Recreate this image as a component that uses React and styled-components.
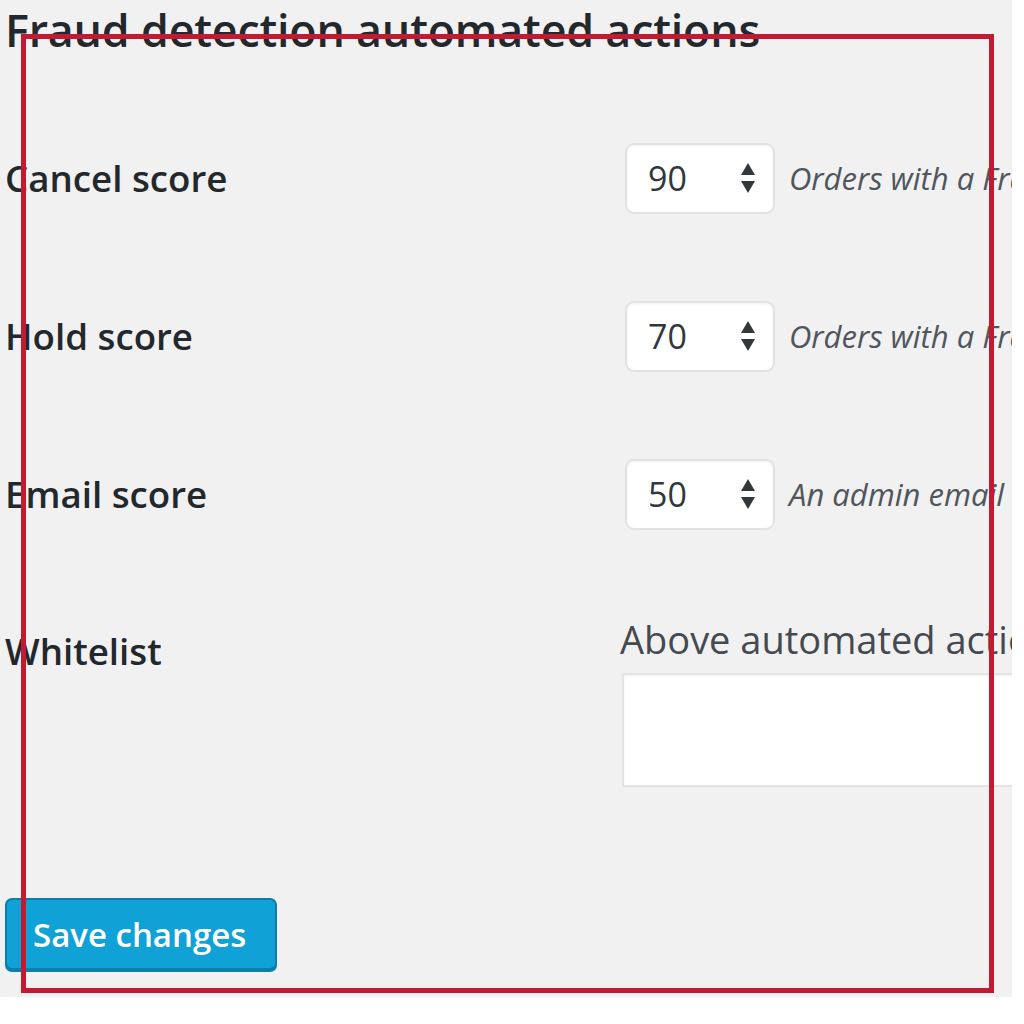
import React from "react";
import styled, { createGlobalStyle } from "styled-components";

const GlobalStyle = createGlobalStyle`
  html, body {
    margin: 0;
    padding: 0;
    background: #ffffff;
  }
  body {
    font-family: "Open Sans", "Noto Sans", sans-serif;
    color: #23282d;
  }
`;

const scores = [
  { id: "cancel", label: "Cancel score", value: 90, note: "Orders with a Fraud score of 90 or higher will be cancelled." },
  { id: "hold", label: "Hold score", value: 70, note: "Orders with a Fraud score of 70 or higher will be put on hold." },
  { id: "email", label: "Email score", value: 50, note: "An admin email will be sent for orders scoring 50 or higher." },
];

const Spinner = () => (
  <svg width="18" height="34" viewBox="0 0 18 34">
    <path d="M9 2 L16 14 L2 14 Z" fill="#32373c" />
    <path d="M9 32 L16 20 L2 20 Z" fill="#32373c" />
  </svg>
);

const App = () => {
  return (
    <>
      <GlobalStyle />
      <Panel>
        <Title>Fraud detection automated actions</Title>
        <Form>
          {scores.map(({ id, label, value, note }) => (
            <Row key={id}>
              <Label>{label}</Label>
              <Field>
                <NumberBox>
                  <NumberValue>{value}</NumberValue>
                  <Spinner />
                </NumberBox>
                <Note>{note}</Note>
              </Field>
            </Row>
          ))}
          <Row $top>
            <Label $pad>Whitelist</Label>
            <Stack>
              <Hint>Above automated actions will not be applied to these emails.</Hint>
              <TextArea />
            </Stack>
          </Row>
        </Form>
        <Footer>
          <SaveButton>Save changes</SaveButton>
        </Footer>
        <Frame />
      </Panel>
    </>
  );
};

export default App;

const Panel = styled.div`
  position: relative;
  width: 1012px;
  height: 997px;
  background: #f1f1f1;
  overflow: hidden;
  display: flex;
  flex-direction: column;
`;

const Title = styled.h2`
  margin: 0;
  padding: 3px 0 0 5px;
  height: 99px;
  box-sizing: border-box;
  font-size: 44.8px;
  font-weight: 600;
  line-height: 54px;
  letter-spacing: -0.2px;
  color: #23282d;
  white-space: nowrap;
`;

const Form = styled.div`
  display: flex;
  flex-direction: column;
`;

const Row = styled.div`
  display: grid;
  grid-template-columns: 620px 1fr;
  align-items: ${(p) => (p.$top ? "start" : "center")};
  height: ${(p) => (p.$top ? "auto" : "158px")};
  padding-top: ${(p) => (p.$top ? "44px" : "0")};
`;

const Label = styled.div`
  padding-left: 5px;
  padding-top: ${(p) => (p.$pad ? "12px" : "0")};
  font-size: 36.7px;
  font-weight: 600;
  line-height: 44px;
  color: #23282d;
  white-space: nowrap;
`;

const Field = styled.div`
  display: flex;
  align-items: center;
  gap: 14px;
  padding-left: 5px;
  white-space: nowrap;
`;

const NumberBox = styled.div`
  flex: none;
  width: 150px;
  height: 71px;
  box-sizing: border-box;
  display: flex;
  align-items: center;
  justify-content: space-between;
  padding: 0 16px 0 21px;
  background: #ffffff;
  border: 2px solid #e2e2e2;
  border-radius: 9px;
  box-shadow: inset 0 1px 3px rgba(0, 0, 0, 0.05);
`;

const NumberValue = styled.span`
  font-size: 34px;
  color: #32373c;
`;

const Note = styled.span`
  font-size: 31px;
  font-style: italic;
  color: #50565c;
`;

const Stack = styled.div`
  display: flex;
  flex-direction: column;
  gap: 12px;
  white-space: nowrap;
`;

const Hint = styled.div`
  font-size: 38px;
  line-height: 44px;
  color: #444a50;
`;

const TextArea = styled.div`
  margin-left: 2px;
  width: 420px;
  height: 114px;
  box-sizing: border-box;
  background: #ffffff;
  border: 2px solid #e4e4e4;
  box-shadow: inset 0 1px 3px rgba(0, 0, 0, 0.05);
`;

const Footer = styled.div`
  padding: 111px 0 0 5px;
`;

const SaveButton = styled.button`
  width: 272px;
  height: 72px;
  padding: 0 0 0 26px;
  text-align: left;
  font-family: "Open Sans", "Noto Sans", sans-serif;
  font-size: 33px;
  font-weight: 600;
  color: #ffffff;
  background: #10a2d6;
  border: 2px solid #0a7fae;
  border-radius: 7px;
  box-shadow: 0 2px 0 #0a7fae;
`;

const Frame = styled.div`
  position: absolute;
  left: 21px;
  top: 34px;
  width: 973px;
  height: 959px;
  box-sizing: border-box;
  border: 5px solid #c21a30;
  pointer-events: none;
`;
